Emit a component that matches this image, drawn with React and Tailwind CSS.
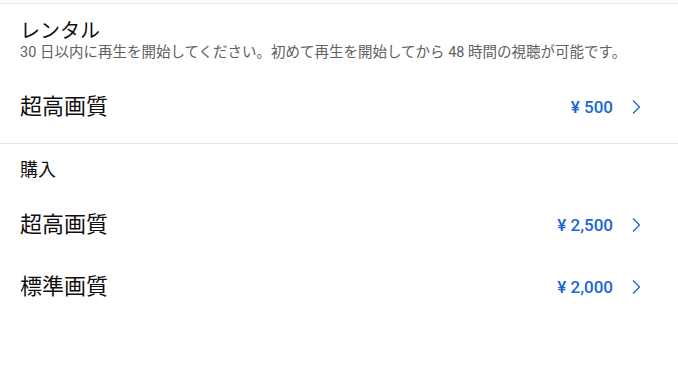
import React from "react";

const Chevron = () => (
  <svg width="10" height="16" viewBox="0 0 10 16" className="block">
    <path d="M2 1.5 L8.5 8 L2 14.5" fill="none" stroke="#1967d2" strokeWidth="1.3" />
  </svg>
);

const Row = ({ label, price }) => (
  <div className="h-[62px] flex items-center justify-between pl-5 pr-[37px]">
    <span className="text-[22px] leading-[28px] text-[#0f0f0f]">{label}</span>
    <div className="flex items-center gap-[18px]">
      <span className="text-[17px] leading-[22px] font-medium text-[#1967d2]">{price}</span>
      <Chevron />
    </div>
  </div>
);

export default function App() {
  return (
    <div
      className="w-[678px] h-[390px] bg-white"
      style={{ fontFamily: 'Roboto, "Noto Sans CJK JP", sans-serif' }}
    >
      <div className="h-[3px]" />
      <div className="border-t border-[#e5e5e5]">
        <div className="px-5 pt-[14px]">
          <div className="text-[20px] leading-[26px] text-[#0f0f0f]">レンタル</div>
          <div className="text-[14.5px] leading-[18px] text-[#606060] whitespace-nowrap">
            30 日以内に再生を開始してください。初めて再生を開始してから 48 時間の視聴が可能です。
          </div>
        </div>
        <div className="mt-[14px] mb-[5px]">
          <Row label="超高画質" price="¥ 500" />
        </div>
      </div>
      <div className="border-t border-[#e5e5e5]">
        <div className="px-5 pt-[14px] text-[18px] leading-[24px] text-[#0f0f0f]">購入</div>
        <div className="mt-[12px]">
          <Row label="超高画質" price="¥ 2,500" />
          <Row label="標準画質" price="¥ 2,000" />
        </div>
      </div>
    </div>
  );
}
